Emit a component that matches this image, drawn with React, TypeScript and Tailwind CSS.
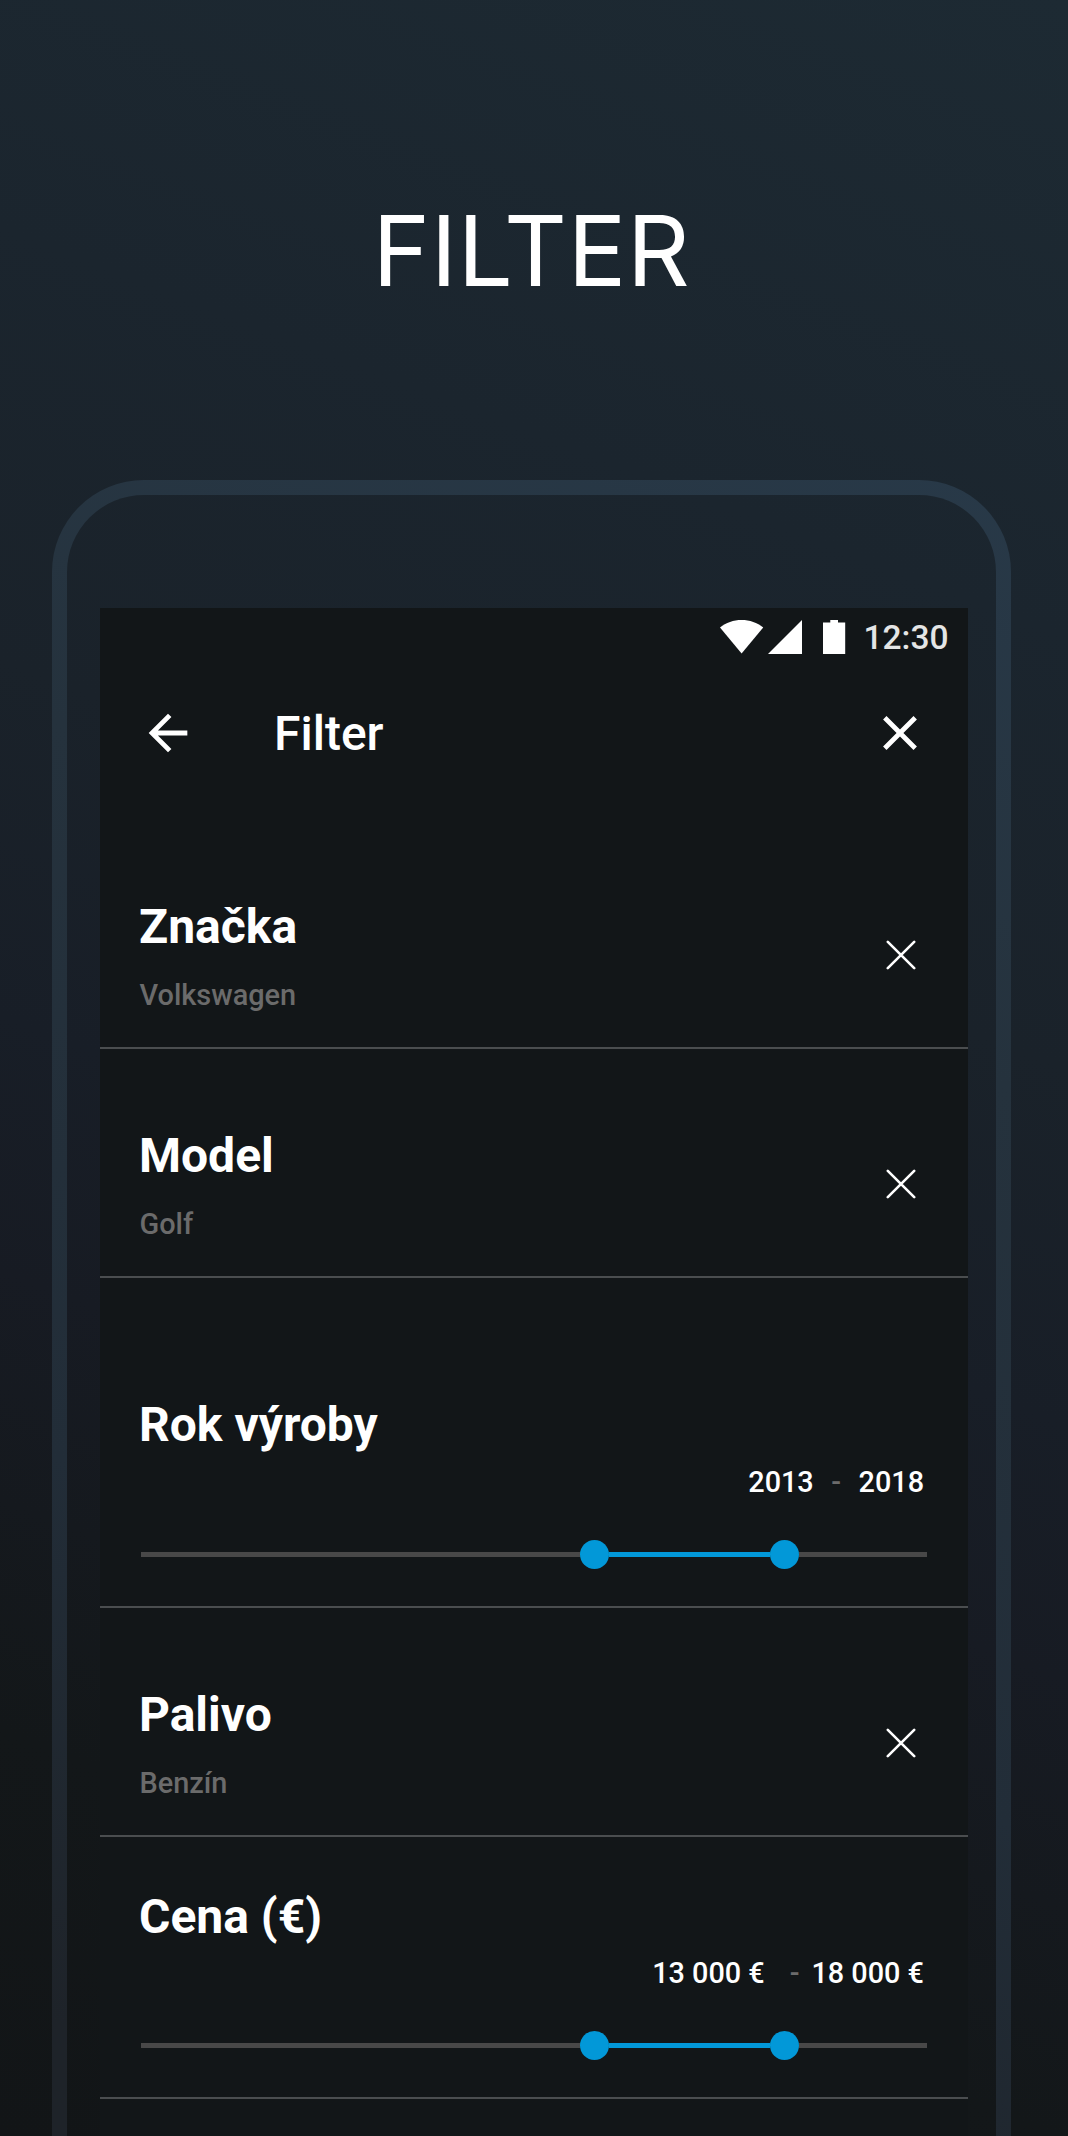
import { MdArrowBack, MdClose } from 'react-icons/md'

interface HeadingProps {
  children: string
}

interface ChoiceRowProps {
  title: string
  value: string
  className: string
}

interface RangeRowProps {
  title: string
  from: string
  to: string
  className: string
  valuesClassName: string
  dashClassName: string
}

function Heading({ children }: HeadingProps) {
  return <h3 className="text-[48px] leading-[56px] font-bold">{children}</h3>
}

function ClearIcon() {
  return (
    <svg viewBox="0 0 30 30" className="size-[30px]" fill="none" stroke="currentColor" strokeWidth="2.6" strokeLinecap="round">
      <path d="M1.8 1.8 28.2 28.2M28.2 1.8 1.8 28.2" />
    </svg>
  )
}

function ChoiceRow({ title, value, className }: ChoiceRowProps) {
  return (
    <section className={`flex justify-between border-b-2 border-[#4a4d4f] pl-[39px] pr-[52.5px] ${className}`}>
      <div>
        <Heading>{title}</Heading>
        <p className="mt-[23px] ml-[0.5px] text-[28.9px] leading-[34px] font-medium text-[#6b6b6b]">{value}</p>
      </div>
      <button type="button" aria-label={`Clear ${title}`} className="mt-[41px] h-[30px]">
        <ClearIcon />
      </button>
    </section>
  )
}

function RangeRow({ title, from, to, className, valuesClassName, dashClassName }: RangeRowProps) {
  return (
    <section className={`border-b-2 border-[#4a4d4f] pl-[39px] pr-[41px] ${className}`}>
      <Heading>{title}</Heading>
      <div className={`flex justify-end pr-[3px] text-[28.8px] leading-[34px] font-medium ${valuesClassName}`}>
        <span>{from}</span>
        <span className={`text-[#6b6b6b] ${dashClassName}`}>-</span>
        <span>{to}</span>
      </div>
      <div className="mt-[41px] ml-[2px] flex h-[29px] items-center">
        <div className="h-[5px] w-[439px] bg-[#484848]" />
        <div className="size-[29px] rounded-full bg-[#0298d8]" />
        <div className="h-[5px] w-[161px] bg-[#0298d8]" />
        <div className="size-[29px] rounded-full bg-[#0298d8]" />
        <div className="h-[5px] flex-1 bg-[#484848]" />
      </div>
    </section>
  )
}

function StatusBar() {
  return (
    <div className="flex h-[58px] items-start justify-end pr-[19.5px] pt-[12px]">
      <svg viewBox="0 0 126 34" className="h-[34px] w-[126px]" fill="#fff">
        <path d="M0 7.5C6 2.5 13.5 0 21.6 0s15.6 2.5 21.6 7.5L21.6 33.6z" />
        <path d="M48 34 82 0v34z" />
        <path d="M103 2.5h7.3V0h7.7v2.5h7.2V34H103z" />
      </svg>
      <span className="ml-[18px] text-[33.5px] leading-[36px] font-medium text-[#e4e5e5]">12:30</span>
    </div>
  )
}

export default function App() {
  return (
    <div className="flex h-[2136px] w-[1068px] flex-col overflow-hidden bg-linear-[201deg,#1d2a33_0%,#1b252e_25%,#1a222a_42%,#181e27_56%,#171b23_66%,#131719_84%,#121517_100%] bg-fixed font-[Roboto,sans-serif] text-white">
      <h1 className="h-[480px] shrink-0 pt-[192px] pr-[5px] text-center font-[Inter,sans-serif] text-[97.5px] leading-[118px] tracking-[0.7px]">
        FILTER
      </h1>

      {/* Phone frame, runs off the bottom of the page */}
      <div className="ml-[52px] h-[1800px] w-[959px] shrink-0 rounded-t-[92px] bg-linear-[201deg,#283948_0%,#25323d_28%,#222d38_62%,#1e2329_88%] p-[15px] pb-0">
        <div className="h-full rounded-t-[77px] bg-linear-[201deg,#1d2a33_0%,#1b252e_25%,#1a222a_42%,#181e27_56%,#171b23_66%,#131719_84%,#121517_100%] bg-fixed pt-[113px] pl-[33px] pr-[28px]">
          <div className="h-full bg-[#121618]">
            <StatusBar />

            <header className="flex h-[134px] items-center px-[39px]">
              <MdArrowBack className="size-[58px]" />
              <h2 className="mt-[2px] ml-[77px] text-[48px] font-medium">Filter</h2>
              <MdClose className="ml-auto size-[58px]" />
            </header>

            <ChoiceRow title="Značka" value="Volkswagen" className="h-[249px] pt-[99px]" />
            <ChoiceRow title="Model" value="Golf" className="h-[229px] pt-[79px]" />
            <RangeRow title="Rok výroby" from="2013" to="2018" className="h-[330px] pt-[119px]" valuesClassName="mt-[12px]" dashClassName="mx-[17.5px]" />
            <ChoiceRow title="Palivo" value="Benzín" className="h-[229px] pt-[79px]" />
            <RangeRow title="Cena (€)" from="13 000 €" to="18 000 €" className="h-[262px] pt-[52px]" valuesClassName="mt-[11px]" dashClassName="ml-[25px] mr-[12px]" />
          </div>
        </div>
      </div>
    </div>
  )
}
